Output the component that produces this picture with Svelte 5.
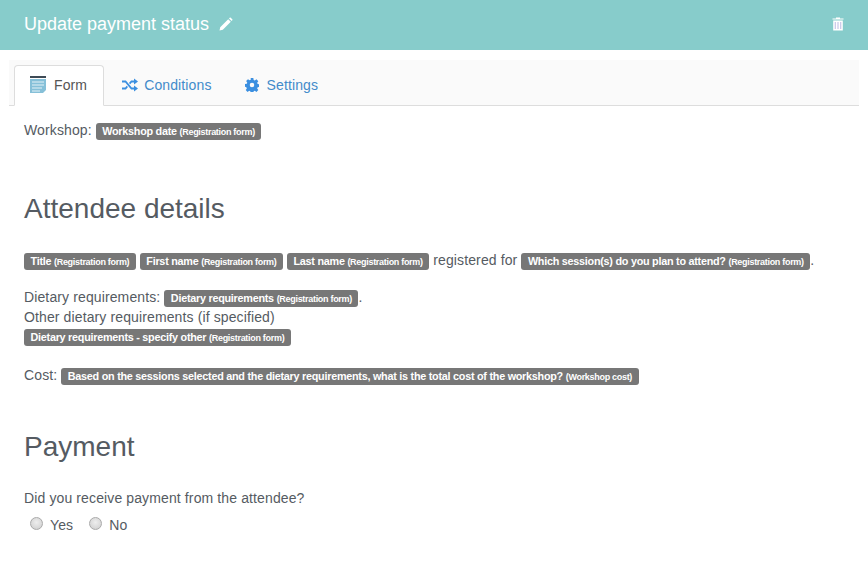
<script lang="ts">
    const tabs = [
        { id: "form", label: "Form" },
        { id: "conditions", label: "Conditions" },
        { id: "settings", label: "Settings" },
    ];
</script>

{#snippet tag(name: string, source: string)}
    <span class="tag">{name} <small>({source})</small></span>
{/snippet}

<header class="title-bar">
    <h1>Update payment status</h1>
    <svg class="pencil" viewBox="0 0 14 14" width="14" height="14">
        <path d="M0.500 13.500l.7-3.300L9.200 2.200l2.600 2.600-8 8z M10 1.400l.7-.7c.3-.3.7-.3 1 0l1.600 1.600c.3.3.3.7 0 1l-.7.7z" fill="#fff" />
    </svg>
    <svg class="trash" viewBox="0 0 12 14" width="12" height="14">
        <path d="M4 1.500V.5h4v1h3.500v1H.5v-1z M1.200 3.500h9.600V13.500H1.200z" fill="#fff" />
        <path d="M3.300 5v7M6 5v7M8.700 5v7" stroke="#c9c6e8" stroke-width="1.200" />
    </svg>
</header>

<main class="content">
    <nav class="tabs">
        {#each tabs as t}
            <a class="tab" class:active={t.id === "form"} href="#{t.id}">
                {#if t.id === "form"}
                    <svg viewBox="0 0 16 18" width="16" height="18">
                        <path d="M0 0h16v2H0z" fill="#3d4a55" />
                        <path d="M0 3h16v11l-3 3H0z" fill="#86c0d8" />
                        <path d="M2 6h12M2 9h12M2 12h10M2 15h8" stroke="#e4f2f7" stroke-width="1" />
                    </svg>
                {:else if t.id === "conditions"}
                    <svg viewBox="0 0 16 14" width="16" height="14">
                        <path d="M0 3.500h3.500l6 7H12M0 10.500h3.500l1.800-2.100M7.600 5.600l1.900-2.100H12" fill="none" stroke="#3b8fe0" stroke-width="1.800" />
                        <path d="M12 0.500l4 3-4 3zM12 7.500l4 3-4 3z" fill="#3b8fe0" />
                    </svg>
                {:else}
                    <svg viewBox="0 0 16 16" width="14" height="14">
                        <path fill-rule="evenodd" d="M6.500 0h3l.4 2.200 1.300.6 1.900-1.300 2.100 2.100-1.300 1.900.6 1.300 2.200.4v3l-2.200.4-.6 1.300 1.300 1.900-2.100 2.100-1.900-1.300-1.300.6-.4 2.200h-3l-.4-2.200-1.300-.6-1.900 1.300-2.100-2.100 1.300-1.900-.6-1.300L-.2 10V7l2.200-.4.6-1.300-1.300-1.900 2.100-2.100 1.900 1.300 1.300-.6zM8 5.400a2.600 2.600 0 1 0 0 5.200 2.600 2.600 0 0 0 0-5.200z" fill="#3b8fe0" />
                    </svg>
                {/if}
                <span>{t.label}</span>
            </a>
        {/each}
    </nav>

    <div class="body">
        <p class="workshop">Workshop: {@render tag("Workshop date", "Registration form")}</p>

        <h2 class="attendee">Attendee details</h2>

        <p class="names">
            {@render tag("Title", "Registration form")}
            {@render tag("First name", "Registration form")}
            {@render tag("Last name", "Registration form")}
            registered for
            {@render tag("Which session(s) do you plan to attend?", "Registration form")}.
        </p>

        <p class="dietary">
            Dietary requirements: {@render tag("Dietary requirements", "Registration form")}.<br />
            Other dietary requirements (if specified)<br />
            {@render tag("Dietary requirements - specify other", "Registration form")}
        </p>

        <p class="cost">
            Cost: {@render tag("Based on the sessions selected and the dietary requirements, what is the total cost of the workshop?", "Workshop cost")}
        </p>

        <h2 class="payment">Payment</h2>

        <p class="question">Did you receive payment from the attendee?</p>
        <div class="radios">
            <label><input type="radio" name="paid" /> Yes</label>
            <label><input type="radio" name="paid" /> No</label>
        </div>
    </div>
</main>

<style>
    :global(body) {
        background: #fff;
        font-family: "Liberation Sans", Arial, sans-serif;
        font-size: 14px;
        line-height: 20px;
        letter-spacing: 0.12px;
        color: #555b62;
    }

    .title-bar {
        height: 50px;
        background: #87cccb;
        display: flex;
        align-items: center;
        padding: 0 24px 3px;
        color: #fff;
        box-sizing: border-box;
    }

    h1 {
        margin: 0;
        font-size: 18px;
        font-weight: 400;
        letter-spacing: 0;
    }

    .pencil {
        margin-left: 10px;
    }

    .trash {
        margin-left: auto;
    }

    .content {
        padding: 10px 9px 0;
    }

    .tabs {
        display: flex;
        background: #fafafa;
        border-bottom: 1px solid #ddd;
        padding: 5px 0 0 5px;
        height: 40px;
    }

    .tab {
        display: flex;
        align-items: center;
        gap: 6px;
        padding: 0 14px 2px 17px;
        height: 41px;
        box-sizing: border-box;
        border: 1px solid transparent;
        border-radius: 4px 4px 0 0;
        color: #428bca;
        text-decoration: none;
    }

    .tab:last-child {
        gap: 8px;
    }

    .tab.active {
        gap: 8px;
        padding: 0 16px 2px 15px;
        background: #fff;
        border-color: #ddd;
        border-bottom-color: #fff;
        color: #555;
    }

    .body {
        padding: 0 15px;
    }

    p {
        margin: 0;
    }

    h2 {
        margin: 0;
        font-size: 28px;
        line-height: 32px;
        font-weight: 400;
        letter-spacing: 0;
    }

    .workshop { margin-top: 14px; }
    .attendee { margin-top: 53px; }
    .names { margin-top: 25px; }
    .dietary { margin-top: 18px; line-height: 19.5px; }
    .cost { margin-top: 18px; }
    .payment { margin-top: 46px; }
    .question { margin-top: 25px; }

    .tag {
        display: inline;
        background: #777;
        color: #fff;
        font-size: 10.8px;
        font-weight: 700;
        line-height: 1;
        letter-spacing: -0.25px;
        padding: 2px 6.5px 3px;
        border-radius: 3px;
    }

    .tag small {
        font-size: 9px;
        letter-spacing: -0.3px;
    }

    .radios {
        display: flex;
        gap: 16px;
        margin-top: 7px;
        padding-left: 6px;
    }

    .radios label {
        display: flex;
        align-items: center;
        gap: 7px;
    }

    .radios input {
        appearance: none;
        width: 13px;
        height: 13px;
        margin: -3px 0 0;
        border-radius: 50%;
        border: 1px solid #aaa;
        background: radial-gradient(circle at 50% 40%, #eee, #ccc);
    }
</style>
